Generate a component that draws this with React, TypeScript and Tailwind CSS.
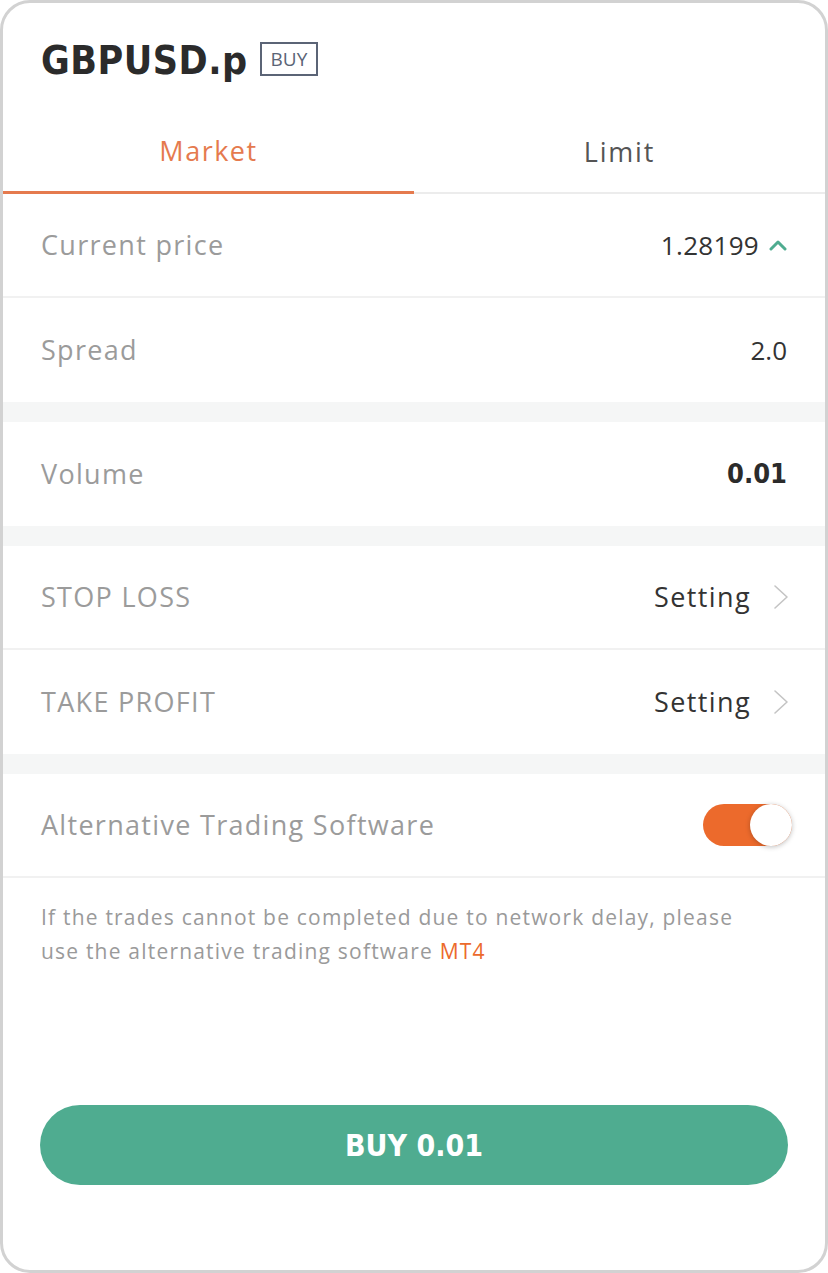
const sans = "font-['Open_Sans','Noto_Sans',sans-serif]";
const din = "font-['DejaVu_Sans_Condensed','DejaVu_Sans',sans-serif]";

export default function App() {
  return (
    <main className="h-[1273px] w-[828px] bg-white">
      <div className={`flex h-full flex-col overflow-hidden rounded-[30px] border-[3px] border-[#d2d2d2] bg-white ${sans}`}>
        <header className="flex h-[77px] items-end gap-[12px] px-[38px]">
          <h1 className={`text-[39px] font-bold leading-none tracking-[0.5px] text-[#2b2b2b] ${din}`}>GBPUSD.p</h1>
          <span className="mb-[4px] border-2 border-[#5b6476] px-[9px] py-[3px] text-[19px] leading-[24px] text-[#5b6476]">
            BUY
          </span>
        </header>

        <nav className="mt-[35px] grid grid-cols-2 border-b-2 border-[#ececec]">
          <button className="-mb-[2px] border-b-[3px] border-[#e57a4e] pb-[22px] pt-[18px] text-[27px] leading-[36px] tracking-[1.5px] text-[#e57a4e]">
            Market
          </button>
          <button className="pb-[22px] pt-[18px] text-[27px] leading-[36px] tracking-[1.8px] text-[#555]">Limit</button>
        </nav>

        <Row label="Current price" divider>
          <span className="text-[26px] tracking-[0.3px] text-[#333]">1.28199</span>
          <svg width="18" height="12" viewBox="0 0 18 12" className="ml-[10px]">
            <path d="M2 10 L9 3 L16 10" fill="none" stroke="#4fac90" strokeWidth="3" strokeLinecap="round" strokeLinejoin="round" />
          </svg>
        </Row>
        <Row label="Spread">
          <span className="text-[26px] text-[#333]">2.0</span>
        </Row>
        <Band />
        <Row label="Volume">
          <span className={`text-[27px] font-bold text-[#2b2b2b] ${din}`}>0.01</span>
        </Row>
        <Band />
        <Row label="STOP LOSS" divider>
          <span className="text-[27px] tracking-[1.4px] text-[#333]">Setting</span>
          <Arrow />
        </Row>
        <Row label="TAKE PROFIT">
          <span className="text-[27px] tracking-[1.4px] text-[#333]">Setting</span>
          <Arrow />
        </Row>
        <Band />
        <Row label="Alternative Trading Software" divider>
          <div className="mr-[-5px] flex h-[42px] w-[89px] items-center justify-end rounded-full bg-[#ec6a2c]">
            <div className="h-[42px] w-[42px] rounded-full bg-white shadow-[0_1px_5px_rgba(0,0,0,0.25)]" />
          </div>
        </Row>

        <p className="pl-[38px] pr-[74px] pt-[22px] text-[21px] leading-[34px] tracking-[1.2px] text-[#9a9a9a]">
          If the trades cannot be completed due to network delay, please use the alternative trading software{" "}
          <span className="text-[#ec6a2c]">MT4</span>
        </p>

        <div className="mt-auto px-[37px] pb-[85px]">
          <button className={`h-[80px] w-full rounded-full bg-[#4fac90] text-[30px] font-bold text-white ${din}`}>
            BUY 0.01
          </button>
        </div>
      </div>
    </main>
  );
}

function Row({ label, children, divider }: { label: string; children: React.ReactNode; divider?: boolean }) {
  return (
    <div className={`flex h-[104px] items-center justify-between px-[38px] ${divider ? "border-b-2 border-[#f1f1f1]" : ""}`}>
      <span className="text-[27px] tracking-[1.3px] text-[#9b9b9b]">{label}</span>
      <div className="flex items-center">{children}</div>
    </div>
  );
}

function Arrow() {
  return (
    <svg width="16" height="26" viewBox="0 0 16 26" className="ml-[22px] mr-[-2px]">
      <path d="M2 2 L14 13 L2 24" fill="none" stroke="#c4c4c4" strokeWidth="1.6" strokeLinecap="round" strokeLinejoin="round" />
    </svg>
  );
}

function Band() {
  return <div className="h-[20px] bg-[#f5f6f6]" />;
}
